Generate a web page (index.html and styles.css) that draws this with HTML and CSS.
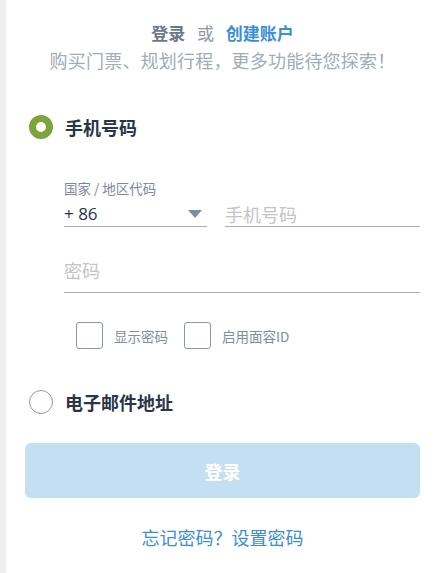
FILE: index.html
```html
<!DOCTYPE html>
<html lang="zh-CN">
<head>
    <meta charset="UTF-8">
    <meta name="viewport" content="width=device-width, initial-scale=1.0">
    <title>登录</title>
    <link rel="stylesheet" href="styles.css">
</head>
<body>
    <div class="page">
        <div class="intro">
            <div class="intro-title">
                <span class="muted-strong">登录</span>
                <span class="or">或</span>
                <a class="link-strong" href="#">创建账户</a>
            </div>
            <div class="intro-sub">购买门票、规划行程，更多功能待您探索！</div>
        </div>

        <div class="option">
            <span class="radio checked"></span>
            <span class="option-label">手机号码</span>
        </div>

        <div class="fields">
            <div class="phone-row">
                <div class="country">
                    <div class="field-label">国家 / 地区代码</div>
                    <div class="field select">
                        <span>+ 86</span>
                        <span class="caret"></span>
                    </div>
                </div>
                <div class="field phone">
                    <span class="placeholder">手机号码</span>
                </div>
            </div>

            <div class="field password">
                <span class="placeholder">密码</span>
            </div>

            <div class="checks">
                <label class="check"><span class="box"></span>显示密码</label>
                <label class="check"><span class="box"></span>启用面容ID</label>
            </div>
        </div>

        <div class="option email">
            <span class="radio"></span>
            <span class="option-label">电子邮件地址</span>
        </div>

        <button class="submit">登录</button>

        <div class="forgot">
            <a href="#">忘记密码？设置密码</a>
        </div>
    </div>
</body>
</html>
```

FILE: styles.css
```css
body {
    margin: 0;
    background: #efefef;
    font-family: "Noto Sans CJK SC", "Noto Sans", sans-serif;
    color: #2b3448;
}
a { text-decoration: none; }
.page {
    margin-left: 6px;
    min-height: 573px;
    background: #fff;
    padding: 20px 19px 0;
    box-sizing: border-box;
}
.intro { text-align: center; }
.intro-title {
    font-size: 17px;
    line-height: 26px;
}
.muted-strong { color: #6d788a; font-weight: 600; }
.or { color: #8f98a6; margin: 0 8px; }
.link-strong { color: #3a8ed6; font-weight: 600; }
.intro-sub {
    margin-top: 1px;
    font-size: 18px;
    line-height: 26px;
    letter-spacing: 0.2px;
    color: #a3abb7;
}
.option {
    display: flex;
    align-items: center;
    gap: 12px;
    margin-top: 42px;
    padding-left: 4px;
    height: 24px;
}
.option.email { margin-top: 41px; }
.radio {
    width: 24px;
    height: 24px;
    border-radius: 50%;
    box-sizing: border-box;
    border: 1.5px solid #8a98ae;
}
.radio.checked { border: 7px solid #7ba43b; }
.option-label {
    font-size: 18px;
    font-weight: 600;
    color: #2b3448;
}
.fields { padding-left: 39px; }
.phone-row {
    display: flex;
    align-items: flex-end;
    gap: 18px;
    margin-top: 41px;
}
.country { width: 143px; }
.field-label {
    font-size: 13.5px;
    line-height: 16px;
    color: #7f8898;
    margin-bottom: 6px;
}
.field {
    font-size: 18px;
    line-height: 24px;
    border-bottom: 1px solid #a2aec0;
}
.select {
    display: flex;
    justify-content: space-between;
    align-items: center;
    padding-right: 5px;
    color: #2b3448;
    font-family: "Open Sans", "Noto Sans", sans-serif;
    font-size: 17px;
}
.caret {
    width: 0;
    height: 0;
    border-left: 7px solid transparent;
    border-right: 7px solid transparent;
    border-top: 8px solid #7f8ca1;
}
.phone { flex: 1; }
.placeholder { color: #c4c4c4; }
.password {
    margin-top: 31px;
    padding-bottom: 10px;
}
.checks {
    display: flex;
    gap: 16px;
    margin-top: 29px;
    padding-left: 12px;
}
.check {
    display: flex;
    align-items: center;
    gap: 11px;
    font-size: 13.5px;
    color: #838c9b;
}
.box {
    width: 27px;
    height: 27px;
    box-sizing: border-box;
    border: 1.5px solid #8b97ab;
    border-radius: 3px;
}
.submit {
    display: block;
    width: 100%;
    height: 55px;
    margin-top: 29px;
    border: none;
    border-radius: 6px;
    background: #c3dff1;
    color: #fff;
    font-family: inherit;
    font-size: 18px;
    font-weight: 600;
}
.forgot {
    margin-top: 27px;
    text-align: center;
    font-size: 18px;
    line-height: 24px;
}
.forgot a { color: #3a8ed6; }
```
